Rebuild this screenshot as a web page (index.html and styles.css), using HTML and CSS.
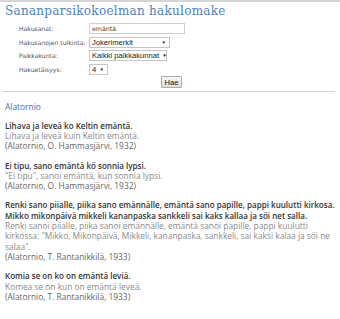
FILE: index.html
```html
<!DOCTYPE html>
<html lang="fi">
<head>
<meta charset="utf-8">
<title>Sananparsikokoelman hakulomake</title>
<link rel="stylesheet" href="styles.css">
</head>
<body>
<div class="page">
  <h1 class="title">Sananparsikokoelman hakulomake</h1>
  <form class="search">
    <div class="row">
      <label class="lbl">Hakusanat:</label>
      <input class="txt" type="text" value="emäntä">
    </div>
    <div class="row">
      <label class="lbl">Hakusanojen tulkinta:</label>
      <span class="sel w1">Jokerimerkit<span class="arr">▼</span></span>
    </div>
    <div class="row">
      <label class="lbl">Paikkakunta:</label>
      <span class="sel w2">Kaikki paikkakunnat<span class="arr">▼</span></span>
    </div>
    <div class="row">
      <label class="lbl">Hakuetäisyys:</label>
      <span class="sel w3">4<span class="arr">▼</span></span>
    </div>
    <div class="btnrow"><span class="btn">Hae</span></div>
  </form>
  <hr class="sep">
  <div class="results">
    <div class="place">Alatornio</div>
    <div class="entry">
      <div class="orig">Lihava ja leveä ko Keltin emäntä.</div>
      <div class="trans">Lihava ja leveä kuin Keltin emäntä.</div>
      <div class="src">(Alatornio, O. Hammasjärvi, 1932)</div>
    </div>
    <div class="entry">
      <div class="orig">Ei tipu, sano emäntä kö sonnia lypsi.</div>
      <div class="trans">"Ei tipu", sanoi emäntä, kun sonnia lypsi.</div>
      <div class="src">(Alatornio, O. Hammasjärvi, 1932)</div>
    </div>
    <div class="entry">
      <div class="orig">Renki sano piialle, piika sano emännälle, emäntä sano papille, pappi kuulutti kirkosa.<br>Mikko mikonpäivä mikkeli kananpaska sankkeli sai kaks kallaa ja söi net salla.</div>
      <div class="trans">Renki sanoi piialle, piika sanoi emännälle, emäntä sanoi papille, pappi kuulutti kirkossa: "Mikko, Mikonpäivä, Mikkeli, kananpaska, sankkeli, sai kaksi kalaa ja söi ne salaa".</div>
      <div class="src">(Alatornio, T. Rantanikkilä, 1933)</div>
    </div>
    <div class="entry">
      <div class="orig">Komia se on ko on emäntä leviä.</div>
      <div class="trans">Komea se on kun on emäntä leveä.</div>
      <div class="src">(Alatornio, T. Rantanikkilä, 1933)</div>
    </div>
  </div>
</div>
</body>
</html>
```
FILE: styles.css
```css
html, body { margin: 0; padding: 0; background: #fff; }
.page {
  border-top: 2px solid #d6d6d6;
  padding: 0 3px 0 5px;
  font-family: "Open Sans", "Liberation Sans", sans-serif;
}
.title {
  margin: 0;
  font-family: "DejaVu Serif", serif;
  font-stretch: condensed;
  font-weight: normal;
  font-size: 13.3px;
  line-height: 17px;
  color: #4a82bd;
  letter-spacing: 0.3px;
}
.search {
  margin: 3px 0 0 14px;
  font-family: "DejaVu Sans", Verdana, sans-serif;
  font-size: 6.1px;
  color: #555;
}
.row {
  display: flex;
  align-items: center;
  height: 13.6px;
}
.lbl { width: 70px; flex: none; white-space: nowrap; }
.txt {
  box-sizing: border-box;
  width: 96px;
  height: 11px;
  margin: 0;
  padding: 0 2px;
  border: 1px solid #cfcfcf;
  font-family: "DejaVu Sans", sans-serif;
  font-size: 6.3px;
  color: #444;
  outline: none;
}
.sel {
  box-sizing: border-box;
  display: flex;
  flex: none;
  align-items: center;
  justify-content: space-between;
  white-space: nowrap;
  height: 11px;
  padding: 0 3px 0 2px;
  border: 1px solid #c4c4c4;
  background: #fff;
  font-family: "Liberation Sans", Arial, sans-serif;
  font-size: 7.6px;
  color: #222;
}
.w1 { width: 81px; }
.w2 { width: 78px; }
.w3 { width: 19px; }
.arr { font-size: 4.5px; color: #111; margin-left: 3px; }
.btnrow { display: flex; padding-left: 142px; height: 12px; align-items: center; }
.btn {
  box-sizing: border-box;
  height: 12px;
  width: 21px;
  display: flex;
  align-items: center;
  justify-content: center;
  border: 1px solid #aaa;
  border-radius: 1px;
  background: linear-gradient(#f6f6f6, #dedede);
  font-family: "Liberation Sans", Arial, sans-serif;
  font-size: 7.6px;
  color: #111;
}
.sep {
  margin: 3px 0 0 -2px;
  width: 332px;
  border: 0;
  border-top: 1px solid #d0d0d0;
  height: 0;
}
.results {
  margin-top: 10px;
  font-size: 8.4px;
  line-height: 10.3px;
}
.place { color: #4a6aa8; margin-bottom: 8px; }
.entry { margin-bottom: 9px; }
.orig { font-weight: 600; color: #333; white-space: nowrap; font-size: 8.05px; }
.trans { color: #8a8a8a; }
.src { color: #666; }
```
